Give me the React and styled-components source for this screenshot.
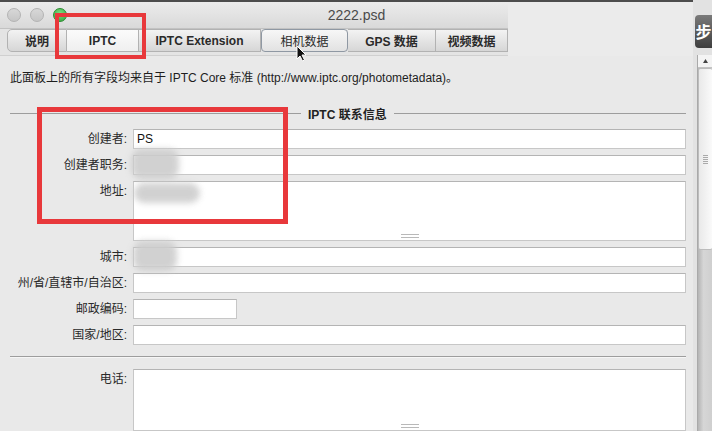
import React from 'react';
import styled, { createGlobalStyle } from 'styled-components';

const GlobalStyle = createGlobalStyle`
  html, body {
    margin: 0;
    padding: 0;
    background: #e9e9e9;
  }
  body {
    font-family: "Liberation Sans", "Noto Sans CJK SC", sans-serif;
    color: #222;
  }
`;

const FONT = `"Liberation Sans", "Noto Sans CJK SC", sans-serif`;

const Screen = styled.div`
  position: relative;
  width: 712px;
  height: 431px;
  overflow: hidden;
  display: flex;
  background: #e9e9e9;
`;

const Window = styled.div`
  width: 693px;
  display: flex;
  flex-direction: column;
  background: #e9e9e9;
`;

const TopEdge = styled.div`
  height: 2px;
  background: #4d4d4d;
  flex-shrink: 0;
`;

const TitleBar = styled.div`
  height: 26px;
  display: flex;
  align-items: center;
  padding-left: 7px;
  gap: 9px;
  position: relative;
  background: linear-gradient(#ececec, #d9d9d9);
  border-bottom: 1px solid #c2c2c2;
  flex-shrink: 0;
`;

const Light = styled.span`
  width: 12px;
  height: 12px;
  border-radius: 50%;
  background: ${(p) => (p.$on ? 'radial-gradient(circle at 50% 35%, #7be07f, #2fa33a)' : 'linear-gradient(#d8d8d8, #c6c6c6)')};
  border: 1px solid ${(p) => (p.$on ? '#2b8a30' : '#b3b3b3')};
`;

const Title = styled.div`
  position: absolute;
  left: 20px;
  right: 0;
  text-align: center;
  font: 14px ${FONT};
  color: #4a4a4a;
  pointer-events: none;
`;

const TabBar = styled.div`
  height: 27px;
  display: flex;
  align-items: flex-start;
  padding: 0 0 0 7px;
  box-sizing: border-box;
  flex-shrink: 0;
  background: #e4e4e4;
  border-bottom: 1px solid #d0d0d0;
`;

const Tab = styled.div`
  width: ${(p) => p.$w}px;
  height: 23px;
  display: flex;
  align-items: center;
  justify-content: center;
  font: ${(p) => (p.$bold ? 700 : 400)} 12px ${FONT};
  color: #2a2a2a;
  box-sizing: border-box;
  border: 1px solid ${(p) => (p.$hover ? '#8f98a3' : '#b2b2b2')};
  border-left: ${(p) => (p.$first || p.$hover ? '' : 'none')};
  border-radius: ${(p) => (p.$first ? '5px 0 0 5px' : p.$hover ? '4px' : '0')};
  background: ${(p) =>
    p.$active
      ? 'linear-gradient(#fbfbfb, #efefef)'
      : p.$hover
      ? 'linear-gradient(#f7f7f7, #e2e2e2)'
      : 'linear-gradient(#f3f3f3, #d6d6d6)'};
`;

const Content = styled.div`
  flex: 1;
  padding: 14px 7px 0 10px;
  display: flex;
  flex-direction: column;
  min-height: 0;
`;

const Intro = styled.p`
  margin: 0;
  font: 12px/16px ${FONT};
  color: #1e1e1e;
  white-space: nowrap;
`;

const SectionHead = styled.div`
  margin-top: 20px;
  height: 14px;
  display: flex;
  align-items: center;
  gap: 7px;
`;

const Rule = styled.div`
  flex: ${(p) => (p.$w ? `0 0 ${p.$w}px` : 1)};
  height: 1px;
  background: #9d9d9d;
`;

const SectionTitle = styled.span`
  font: 700 12px ${FONT};
  color: #222;
`;

const FieldGrid = styled.div`
  margin-top: ${(p) => (p.$flush ? 0 : 9)}px;
  display: grid;
  grid-template-columns: 117px 1fr;
  column-gap: 6px;
  row-gap: 6px;
  align-items: start;
`;

const Label = styled.label`
  font: 12px/20px ${FONT};
  color: #2a2a2a;
  text-align: right;
  white-space: nowrap;
`;

const Field = styled.div`
  height: ${(p) => p.$h || 20}px;
  width: ${(p) => (p.$w ? `${p.$w}px` : 'auto')};
  box-sizing: border-box;
  background: #fff;
  border: 1px solid #c7c7c7;
  border-top-color: #b4b4b4;
  font: 12px/18px ${FONT};
  color: #111;
  padding: 0 3px;
  display: flex;
  flex-direction: column;
  justify-content: space-between;
  align-items: ${(p) => (p.$area ? 'center' : 'flex-start')};
`;

const Grip = styled.div`
  width: 18px;
  height: 2px;
  border-top: 1px solid #b9b9b9;
  border-bottom: 1px solid #b9b9b9;
  margin-bottom: 2px;
`;

const Divider = styled.div`
  margin: 11px 0 11px;
  height: 1px;
  background: #9d9d9d;
  border-bottom: 1px solid #f6f6f6;
`;

const SideStrip = styled.div`
  width: 19px;
  display: flex;
  flex-direction: column;
  background: #e2e2e2;
`;

const StepBadge = styled.div`
  margin: 15px 0 0 2px;
  height: 33px;
  border-radius: 4px 0 0 4px;
  background: linear-gradient(#7a7a7a, #3e3e3e);
  color: #fff;
  font: 700 16px/33px "Noto Sans CJK SC", sans-serif;
  overflow: hidden;
  white-space: nowrap;
  text-align: center;
`;

const Scrollbar = styled.div`
  margin: 7px 0 0 4px;
  flex: 1;
  display: flex;
  flex-direction: column;
  border-left: 1px solid #a9a9a9;
  background: linear-gradient(90deg, #b4b4b4, #d6d6d6 40%, #cfcfcf);
`;

const ScrollArrow = styled.div`
  height: 13px;
  background: #f4f4f4;
  border-bottom: 1px solid #c3c3c3;
  display: flex;
  justify-content: center;
  padding-top: 4px;
  box-sizing: border-box;
`;

const Thumb = styled.div`
  height: 180px;
  background: linear-gradient(90deg, #e9e9e9, #fafafa);
  border: 1px solid #bcbcbc;
  border-right: none;
  border-radius: 2px;
  display: flex;
  align-items: center;
  justify-content: center;
`;

const ThumbGrip = styled.div`
  width: 5px;
  height: 9px;
  background: repeating-linear-gradient(#aaa 0 1px, transparent 1px 2px);
`;

const Occluder = styled.div`
  position: absolute;
  left: 508px;
  top: 2px;
  width: 185px;
  height: 54px;
  background: #ebebeb;
`;

const RedBox = styled.div`
  position: absolute;
  left: ${(p) => p.$x}px;
  top: ${(p) => p.$y}px;
  width: ${(p) => p.$w}px;
  height: ${(p) => p.$h}px;
  box-sizing: border-box;
  border: ${(p) => p.$t}px solid #e8383b;
`;

const Smudge = styled.div`
  position: absolute;
  left: ${(p) => p.$x}px;
  top: ${(p) => p.$y}px;
  width: ${(p) => p.$w}px;
  height: ${(p) => p.$h}px;
  border-radius: 10px;
  background: #cdcdcd;
  filter: blur(3px);
  opacity: 0.9;
`;

const Cursor = styled.svg`
  position: absolute;
  left: 296px;
  top: 45px;
`;

const tabs = [
  { label: '说明', w: 60, first: true, bold: true },
  { label: 'IPTC', w: 72, active: true, bold: true },
  { label: 'IPTC Extension', w: 122, bold: true },
  { label: '相机数据', w: 87, hover: true },
  { label: 'GPS 数据', w: 88, bold: true },
  { label: '视频数据', w: 72, bold: true },
];

const fields = [
  { label: '创建者:', value: 'PS' },
  { label: '创建者职务:' },
  { label: '地址:', h: 60, area: true },
  { label: '城市:' },
  { label: '州/省/直辖市/自治区:' },
  { label: '邮政编码:', w: 104 },
  { label: '国家/地区:' },
];

const App = () => {
  return (
    <Screen>
      <GlobalStyle />
      <Window>
        <TopEdge />
        <TitleBar>
          <Light />
          <Light />
          <Light $on />
          <Title>2222.psd</Title>
        </TitleBar>
        <TabBar>
          {tabs.map((t) => (
            <Tab key={t.label} $w={t.w} $first={t.first} $active={t.active} $hover={t.hover} $bold={t.bold}>
              {t.label}
            </Tab>
          ))}
        </TabBar>
        <Content>
          <Intro>此面板上的所有字段均来自于 IPTC Core 标准 (http://www.iptc.org/photometadata)。</Intro>
          <SectionHead>
            <Rule $w={291} />
            <SectionTitle>IPTC 联系信息</SectionTitle>
            <Rule />
          </SectionHead>
          <FieldGrid>
            {fields.map((f) => (
              <React.Fragment key={f.label}>
                <Label>{f.label}</Label>
                <Field $h={f.h} $w={f.w} $area={f.area}>
                  <span>{f.value || ''}</span>
                  {f.area && <Grip />}
                </Field>
              </React.Fragment>
            ))}
          </FieldGrid>
          <Divider />
          <FieldGrid $flush>
            <Label>电话:</Label>
            <Field $h={62} $area>
              <span />
              <Grip />
            </Field>
          </FieldGrid>
        </Content>
      </Window>
      <SideStrip>
        <StepBadge>步</StepBadge>
        <Scrollbar>
          <ScrollArrow>
            <svg width="5" height="4" viewBox="0 0 5 4">
              <path d="M2.5 0 L5 4 L0 4 Z" fill="#444" />
            </svg>
          </ScrollArrow>
          <Thumb>
            <ThumbGrip />
          </Thumb>
        </Scrollbar>
      </SideStrip>

      <Occluder />
      <Smudge $x={131} $y={149} $w={48} $h={30} />
      <Smudge $x={134} $y={183} $w={66} $h={20} />
      <Smudge $x={133} $y={241} $w={44} $h={30} />
      <RedBox $x={55} $y={13} $w={91} $h={46} $t={4} />
      <RedBox $x={37} $y={107} $w={251} $h={117} $t={5} />
      <Cursor width="12" height="17" viewBox="0 0 12 17">
        <path d="M1 1 L1 14 L4 11 L6.5 16 L8.5 15 L6 10 L10 10 Z" fill="#111" stroke="#fff" strokeWidth="1" />
      </Cursor>
    </Screen>
  );
};

export default App;
